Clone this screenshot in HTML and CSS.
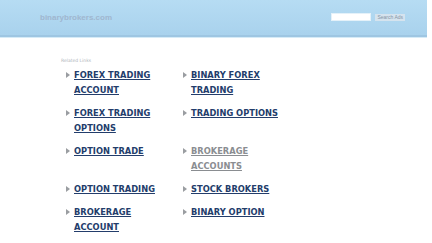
FILE: index.html
```html
<!DOCTYPE html>
<html>
<head>
<meta charset="utf-8">
<link rel="stylesheet" href="styles.css">
</head>
<body>
<div class="header">
  <div class="domain">binarybrokers.com</div>
  <div class="search">
    <span class="search-input"></span>
    <span class="search-btn">Search Ads</span>
  </div>
</div>
<div class="content">
  <div class="related">Related Links</div>
  <div class="links">
    <div class="item"><a href="#">FOREX TRADING ACCOUNT</a></div>
    <div class="item"><a href="#">BINARY FOREX TRADING</a></div>
    <div class="item"><a href="#">FOREX TRADING OPTIONS</a></div>
    <div class="item"><a href="#">TRADING OPTIONS</a></div>
    <div class="item"><a href="#">OPTION TRADE</a></div>
    <div class="item"><a href="#" class="visited">BROKERAGE ACCOUNTS</a></div>
    <div class="item"><a href="#">OPTION TRADING</a></div>
    <div class="item"><a href="#">STOCK BROKERS</a></div>
    <div class="item"><a href="#">BROKERAGE ACCOUNT</a></div>
    <div class="item"><a href="#">BINARY OPTION</a></div>
  </div>
</div>
</body>
</html>
```

FILE: styles.css
```css
html, body {
  margin: 0;
  padding: 0;
  background: #ffffff;
}
body {
  width: 427px;
  font-family: "DejaVu Sans", sans-serif;
}
.header {
  height: 35px;
  background: linear-gradient(#b6dcf3, #a9d2ed);
  border-bottom: 2px solid #9ec6e2;
  box-shadow: 0 1px 0 #d6ebf7;
  display: flex;
  align-items: center;
  justify-content: space-between;
  padding: 0 22px 0 40px;
}
.domain {
  font-family: "Liberation Sans", sans-serif;
  font-weight: bold;
  font-size: 8px;
  color: #9fb6cf;
  margin-top: -1px;
}
.search {
  display: flex;
  align-items: center;
  gap: 4px;
  margin-top: -1px;
}
.search-input {
  display: block;
  width: 38px;
  height: 6px;
  background: #ffffff;
  border: 1px solid #e4f1f9;
}
.search-btn {
  display: block;
  height: 7px;
  line-height: 7px;
  padding: 0 2px;
  background: #d5e3ee;
  color: #8595a6;
  font-family: "Liberation Sans", sans-serif;
  font-size: 5px;
}
.content {
  padding: 20px 0 0 61px;
}
.related {
  font-size: 4.5px;
  color: #b0b6bc;
  height: 7px;
  line-height: 7px;
  margin-bottom: 3.5px;
}
.links {
  display: grid;
  grid-template-columns: 117px 117px;
  row-gap: 8px;
  margin-left: 6px;
}
.item {
  position: relative;
  padding-left: 7px;
  padding-right: 12px;
  font-size: 8.3px;
  font-weight: bold;
  line-height: 15px;
}
.item::before {
  content: "";
  position: absolute;
  left: -1px;
  top: 4.5px;
  border-left: 4px solid #9a9da1;
  border-top: 3px solid transparent;
  border-bottom: 3px solid transparent;
}
.item a {
  color: #233d6b;
  text-decoration: underline;
}
.item a.visited {
  color: #8a8d91;
}
```
